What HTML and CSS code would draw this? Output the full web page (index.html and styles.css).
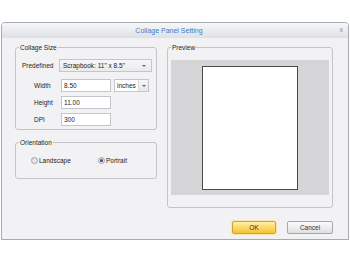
FILE: index.html
```html
<!DOCTYPE html>
<html>
<head>
<meta charset="utf-8">
<link rel="stylesheet" href="styles.css">
</head>
<body>
<div class="dialog">
  <div class="titlebar">
    <span class="title">Collage Panel Setting</span>
    <span class="close">x</span>
  </div>
  <div class="content">
    <div class="main">
      <div class="leftcol">
        <div class="group size">
          <span class="legend">Collage Size</span>
          <div class="row predef">
            <span class="lbl lbl-wide">Predefined</span>
            <div class="select wide"><span class="val">Scrapbook: 11" x 8.5"</span><span class="arrow"></span></div>
          </div>
          <div class="row field first">
            <span class="lbl">Width</span>
            <div class="input">8.50</div>
            <div class="select units"><span class="val">inches</span><span class="btn"><span class="arrow"></span></span></div>
          </div>
          <div class="row field">
            <span class="lbl">Height</span>
            <div class="input">11.00</div>
          </div>
          <div class="row field">
            <span class="lbl">DPI</span>
            <div class="input">300</div>
          </div>
        </div>
        <div class="group orient">
          <span class="legend">Orientation</span>
          <div class="radios">
            <label class="radio landscape"><span class="circle"></span>Landscape</label>
            <label class="radio"><span class="circle checked"></span>Portrait</label>
          </div>
        </div>
      </div>
      <div class="group preview">
        <span class="legend">Preview</span>
        <div class="canvas"><div class="page"></div></div>
      </div>
    </div>
    <div class="buttons">
      <div class="button ok">OK</div>
      <div class="button cancel">Cancel</div>
    </div>
  </div>
</div>
</body>
</html>
```
FILE: styles.css
```css
* { box-sizing: border-box; }
html, body { margin: 0; padding: 0; background: #ffffff; }
body {
  font-family: "Liberation Sans", Arial, sans-serif;
  font-size: 6.5px;
  color: #1c1c1c;
}
.dialog {
  margin: 22px 0 0 1px;
  width: 348px;
  height: 218px;
  border: 1px solid #a7abb1;
  border-radius: 4px 4px 0 0;
  background: #f2f2f5;
  display: flex;
  flex-direction: column;
}
.titlebar {
  height: 15px;
  flex: none;
  background: linear-gradient(#f6f7f9, #e9ebee 55%, #dde0e5);
  display: flex;
  align-items: center;
  justify-content: center;
  padding-right: 12px;
  border-radius: 3px 3px 0 0;
  position: relative;
}
.title {
  font-size: 7px;
  color: #3f7bc8;
  line-height: 15px;
}
.close {
  position: absolute;
  right: 5px;
  top: 3px;
  font-size: 7px;
  color: #8a8a8a;
  line-height: 8px;
}
.content {
  flex: 1;
  padding: 9px 15px 0 13px;
  display: flex;
  flex-direction: column;
}
.main {
  display: flex;
  gap: 10px;
}
.leftcol {
  width: 142px;
  display: flex;
  flex-direction: column;
  gap: 12px;
}
.group {
  border: 1px solid #c3c5ca;
  border-radius: 3px;
  display: flex;
  flex-direction: column;
}
.legend {
  align-self: flex-start;
  margin: -5px 0 0 3px;
  padding: 0 1px;
  height: 9px;
  line-height: 9px;
  background: #f2f2f5;
}
.size { height: 83px; }
.row {
  display: flex;
  align-items: center;
  height: 13px;
}
.predef { margin-top: 7px; padding-left: 6px; }
.field { margin-top: 4px; padding-left: 18px; }
.field.first { margin-top: 7px; }
.lbl { width: 27px; }
.lbl-wide { width: 37px; }
.select {
  height: 13px;
  border: 1px solid #c4c6cb;
  background: linear-gradient(#f7f7f8, #e9eaec);
  display: flex;
  align-items: center;
  padding-left: 3px;
}
.select .val { flex: 1; }
.wide { width: 93px; padding-right: 5px; }
.units { width: 35px; margin-left: 3px; padding-left: 2px; background: #ffffff; }
.units .btn {
  width: 10px;
  height: 11px;
  border-left: 1px solid #d4d6da;
  background: linear-gradient(#f7f7f8, #e6e7ea);
  display: flex;
  align-items: center;
  justify-content: center;
}
.arrow {
  width: 0;
  height: 0;
  border-left: 2px solid transparent;
  border-right: 2px solid transparent;
  border-top: 2px solid #666;
}
.input {
  width: 50px;
  height: 13px;
  border: 1px solid #c4c6cb;
  background: #ffffff;
  line-height: 11px;
  padding-left: 2px;
}
.orient { height: 37px; }
.radios {
  display: flex;
  margin-top: 9px;
  padding-left: 15px;
  height: 9px;
  align-items: center;
}
.radio {
  display: flex;
  align-items: center;
  gap: 1px;
  line-height: 9px;
}
.landscape { width: 67px; }
.circle {
  width: 7px;
  height: 7px;
  border-radius: 50%;
  border: 1px solid #a0a3a8;
  background: radial-gradient(circle at 50% 60%, #f2f2f2, #d2d3d6);
  display: flex;
  align-items: center;
  justify-content: center;
}
.circle.checked::after {
  content: "";
  width: 3px;
  height: 3px;
  border-radius: 50%;
  background: #2f4f86;
}
.preview {
  width: 166px;
  height: 161px;
}
.canvas {
  margin: 8px 3px 0 3px;
  height: 135px;
  background: #d5d5d7;
  display: flex;
  align-items: center;
  justify-content: center;
}
.page {
  width: 96px;
  height: 124px;
  background: #ffffff;
  border: 1px solid #4a4a4a;
}
.buttons {
  display: flex;
  justify-content: flex-end;
  gap: 11px;
  margin-top: 13px;
}
.button {
  height: 13px;
  display: flex;
  align-items: center;
  justify-content: center;
  border-radius: 2px;
  color: #333;
}
.ok {
  width: 44px;
  border: 1px solid #c9a43a;
  background: linear-gradient(#fff0b0, #fcd965 50%, #f6c33a);
  box-shadow: 0 0 1px 1px #f7e7a8;
}
.cancel {
  width: 46px;
  border: 1px solid #a4a7ac;
  background: linear-gradient(#fbfbfc, #ededef 50%, #dedfe2);
}
```
